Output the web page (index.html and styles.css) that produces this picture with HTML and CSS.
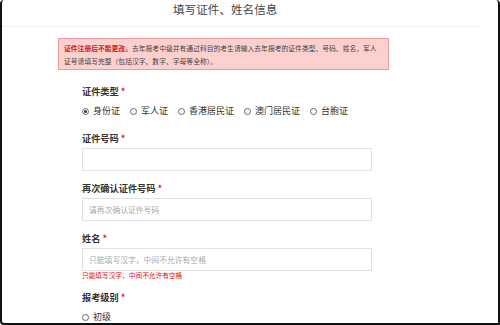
FILE: index.html
```html
<!DOCTYPE html>
<html lang="zh-CN">
<head>
<meta charset="utf-8">
<title>填写证件、姓名信息</title>
<link rel="stylesheet" href="styles.css">
</head>
<body>
<div class="frame">
  <div class="header"><span class="title">填写证件、姓名信息</span></div>
  <div class="content">
    <div class="alert">
      <p><b>证件注册后不能更改。</b>去年报考中级并有通过科目的考生请输入去年报考的证件类型、号码、姓名，军人</p>
      <p>证号请填写完整（包括汉字、数字、字母等全称）。</p>
    </div>
    <div class="form">
      <div class="field">
        <div class="label">证件类型 <span class="req">*</span></div>
        <div class="radios">
          <span class="opt"><span class="radio checked"></span>身份证</span>
          <span class="opt"><span class="radio"></span>军人证</span>
          <span class="opt"><span class="radio"></span>香港居民证</span>
          <span class="opt"><span class="radio"></span>澳门居民证</span>
          <span class="opt"><span class="radio"></span>台胞证</span>
        </div>
      </div>
      <div class="field">
        <div class="label">证件号码 <span class="req">*</span></div>
        <div class="input"></div>
      </div>
      <div class="field">
        <div class="label">再次确认证件号码 <span class="req">*</span></div>
        <div class="input"><span class="ph">请再次确认证件号码</span></div>
      </div>
      <div class="field">
        <div class="label">姓名 <span class="req">*</span></div>
        <div class="input"><span class="ph">只能填写汉字，中间不允许有空格</span></div>
        <div class="error">只能填写汉字，中间不允许有空格</div>
      </div>
      <div class="field">
        <div class="label">报考级别 <span class="req">*</span></div>
        <div class="radios">
          <span class="opt"><span class="radio"></span>初级</span>
        </div>
      </div>
    </div>
  </div>
</div>
</body>
</html>
```

FILE: styles.css
```css
* { box-sizing: border-box; }
html, body { margin: 0; padding: 0; background: #fff; }
body {
  font-family: "Noto Sans CJK SC", "Noto Sans", sans-serif;
  color: #333;
}
.frame {
  width: 500px;
  height: 325px;
  border: 2px solid #111;
  border-top: 0;
  border-radius: 4px 4px 0 4px;
  overflow: hidden;
  background: #fff;
}
.header {
  height: 27px;
  margin-right: 18px;
  border-bottom: 1px solid #eee;
  padding-left: 171px;
  padding-top: 0;
  font-size: 11.6px;
  line-height: 18px;
}
.title {
  color: #444;
}
.content {
  padding-left: 56px;
}
.alert {
  margin-top: 11px;
  width: 331px;
  height: 32px;
  background: #fdd0d0;
  border: 1px solid #ec9a9a;
  padding: 3px 0 0 5px;
  font-size: 6.8px;
  color: #444;
}
.alert p {
  margin: 0;
  line-height: 13px;
  white-space: nowrap;
}
.alert b { color: #d42020; }
.form {
  padding-left: 24px;
  padding-top: 14px;
}
.field { margin-bottom: 10px; }
.field:first-child { margin-bottom: 13px; }
.label {
  font-size: 9.2px;
  font-weight: 700;
  line-height: 14px;
  height: 14px;
  color: #333;
}
.req { color: #e02020; }
.radios {
  margin-top: 6px;
  height: 14px;
  display: flex;
  align-items: center;
  gap: 10px;
  font-size: 9px;
  color: #333;
}
.opt {
  display: flex;
  align-items: center;
  gap: 4px;
  line-height: 14px;
}
.radio {
  width: 7px;
  height: 7px;
  border: 1px solid #666;
  border-radius: 50%;
  display: flex;
  align-items: center;
  justify-content: center;
}
.radio.checked::after {
  content: "";
  width: 3px;
  height: 3px;
  border-radius: 50%;
  background: #333;
}
.input {
  margin-top: 3px;
  width: 290px;
  height: 23px;
  border: 1px solid #e2e2e2;
  padding-left: 6px;
  display: flex;
  align-items: center;
}
.ph {
  font-size: 7.8px;
  color: #aaa;
}
.error {
  font-size: 6.7px;
  line-height: 9px;
  height: 9px;
  color: #e01010;
}
```
